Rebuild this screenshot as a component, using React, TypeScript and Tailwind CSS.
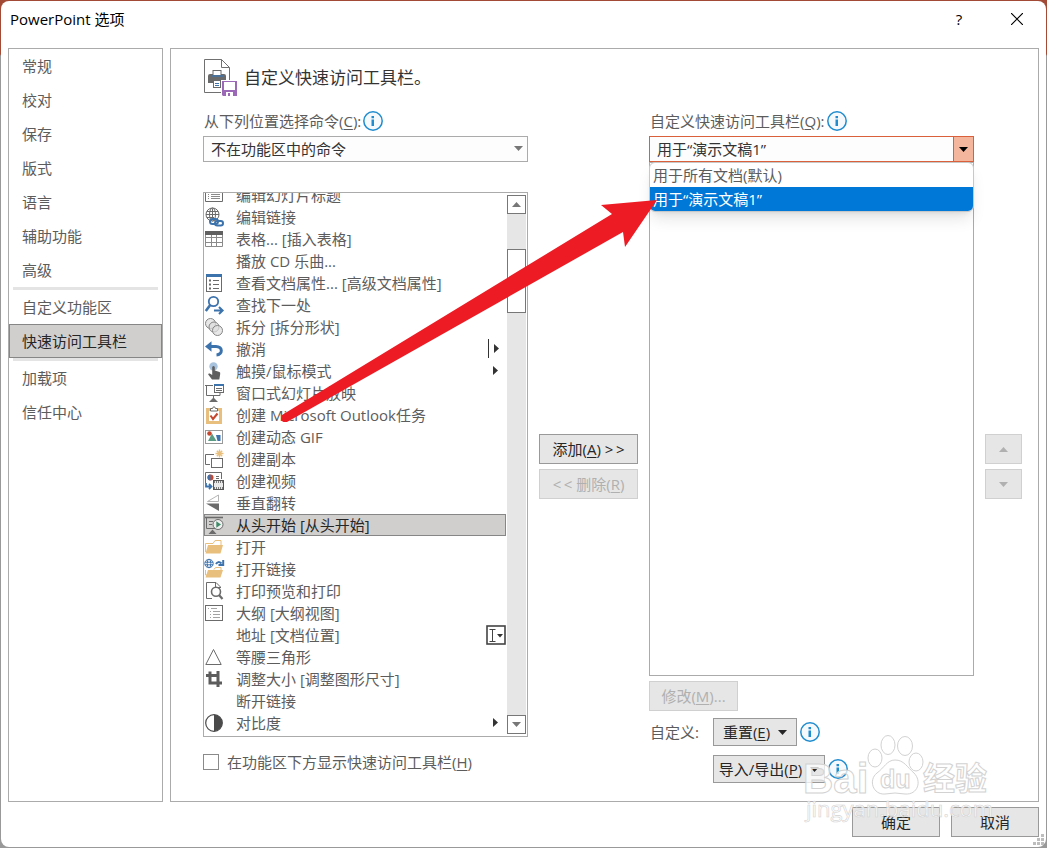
import type { ReactNode } from "react";

const BLUE = "#3d73ad";
const GRAY = "#6b6b6b";
const GOLD = "#e8bf7c";

type Command = {
  name: string;
  icon?: ReactNode;
  marker?: "menu" | "split" | "edit";
  selected?: boolean;
};

const chain = (
  <g fill="none" stroke={BLUE} strokeWidth="2">
    <rect x="5" y="11" width="8" height="5" rx="2.5" />
    <rect x="10" y="13" width="8" height="4.5" rx="2.2" />
  </g>
);

const commands: Command[] = [
  {
    name: "编辑幻灯片标题",
    icon: (
      <g fill="none" stroke={GRAY}>
        <path d="M3 3.5H17.5V15.5H.5V6" />
        <path d="M6 8.5H15M6 10.5H15M6 12.5H15M3 8.5H4M3 10.5H4M3 12.5H4" stroke="#8a8a8a" />
        <path d="M0 6L3 4" stroke={BLUE} strokeWidth="2" />
      </g>
    ),
  },
  {
    name: "编辑链接",
    icon: (
      <>
        <g fill="none" stroke={GRAY}>
          <circle cx="7.5" cy="6.5" r="6.5" />
          <ellipse cx="7.5" cy="6.5" rx="3" ry="6.5" />
          <path d="M1 6.5H14M2 3.5H13M2 9.5H9M7.5 .5V10" />
        </g>
        {chain}
      </>
    ),
  },
  {
    name: "表格... [插入表格]",
    icon: (
      <>
        <path d="M.5 1.5H17.5V16.5H.5ZM.5 7.5H17.5M.5 12.5H17.5M6.5 2V16.5M11.5 2V16.5" fill="none" stroke="#8a8a8a" />
        <rect y="1" width="18" height="4" fill="#606060" />
      </>
    ),
  },
  { name: "播放 CD 乐曲..." },
  {
    name: "查看文档属性... [高级文档属性]",
    icon: (
      <>
        <rect x="1.5" y=".5" width="15" height="17" fill="white" stroke={GRAY} />
        <rect x="1" width="16" height="3" fill={BLUE} />
        <path d="M8 6.5H14M8 10.5H14M8 14.5H14" stroke={GRAY} />
        <path d="M4 6.5H6M4 10.5H6M4 14.5H6" stroke={GRAY} strokeWidth="2" />
      </>
    ),
  },
  {
    name: "查找下一处",
    icon: (
      <g fill="none" stroke={BLUE}>
        <circle cx="8.5" cy="5.5" r="4.7" strokeWidth="1.8" />
        <path d="M5.2 9L.8 15" strokeWidth="2.6" />
        <path d="M9 14.5H17.5M14 11L17.6 14.5L14 18" strokeWidth="2" />
      </g>
    ),
  },
  {
    name: "拆分 [拆分形状]",
    icon: (
      <g fill="#dedede" fillOpacity=".7" stroke="#858585">
        <circle cx="5.5" cy="5.5" r="5" />
        <circle cx="9" cy="9" r="5" />
        <circle cx="12.5" cy="12.5" r="5" />
      </g>
    ),
  },
  {
    name: "撤消",
    marker: "split",
    icon: (
      <>
        <path d="M4 6.5H11C18 6.5 18 14.5 11.5 15" fill="none" stroke={BLUE} strokeWidth="3" />
        <path d="M0 6.5L6.5 1.2V11.8Z" fill={BLUE} />
      </>
    ),
  },
  {
    name: "触摸/鼠标模式",
    marker: "menu",
    icon: (
      <>
        <circle cx="8.5" cy="4.5" r="4.2" fill="#a8c3de" />
        <path d="M7.2 5Q8.5 3.2 9.8 5V8.5L14.5 10Q15.5 10.4 15.2 12L14.3 17.5H7L3.2 12.6Q3.2 11 4.8 11.5L7.2 13Z" fill="#5f5f5f" />
      </>
    ),
  },
  {
    name: "窗口式幻灯片放映",
    icon: (
      <g fill="none" stroke={GRAY}>
        <path d="M0 1.5H8M1.5 2V11.5H15V8.5M8.5 11.5V14" />
        <path d="M4 18L8.5 13.5L13 18Z" fill={GRAY} stroke="none" />
        <rect x="9.5" y=".5" width="9" height="8" fill="white" />
        <path d="M9 1H19" stroke={BLUE} strokeWidth="2" />
        <path d="M11 4.5H17M11 6.5H17" />
      </g>
    ),
  },
  {
    name: "创建 Microsoft Outlook任务",
    icon: (
      <>
        <rect x="2.5" y="3.5" width="13" height="13" fill="white" stroke={GOLD} strokeWidth="3" />
        <path d="M5.5 5V2.5H7.5Q9-1.4 10.5 2.5H12.5V5Z" fill="white" stroke={GRAY} />
        <path d="M5.5 9.5L8 13L12.5 7.5" fill="none" stroke="#c4472e" strokeWidth="2" />
      </>
    ),
  },
  {
    name: "创建动态 GIF",
    icon: (
      <>
        <rect x=".5" y="2.5" width="17" height="13" fill="white" stroke="#999999" />
        <circle cx="4.5" cy="5.5" r="2.3" fill="#c4472e" />
        <path d="M3 13L7 5.5L11.5 13Z" fill="#5b9b83" />
        <path d="M11 7H15.5V13H12.5Z" fill={BLUE} />
      </>
    ),
  },
  {
    name: "创建副本",
    icon: (
      <>
        <path d="M9 4.5H.5V14.5H5" fill="none" stroke={GRAY} />
        <rect x="6.5" y="8.5" width="11" height="9" fill="white" stroke={GRAY} />
        <path d="M14.5-.5V7.5M10.5 3.5H18.5M11.8 .8L17.2 6.2M17.2 .8L11.8 6.2" stroke={GOLD} strokeWidth="1.4" />
      </>
    ),
  },
  {
    name: "创建视频",
    icon: (
      <>
        <path d="M.5 11V.5H16.5V7" fill="none" stroke={GRAY} />
        <circle cx="5.5" cy="5.5" r="3" fill="#c4472e" />
        <path d="M5.5 5.5V2.5A3 3 0 0 0 5.5 8.5Z" fill={BLUE} />
        <path d="M11 4.5H14M11 6.5H14" stroke={GRAY} />
        <rect x="8.5" y="8.5" width="10" height="9" fill="#e9e9e9" stroke="#555555" />
        <path d="M9 10H18M9 16H18" stroke="#555555" strokeWidth="1.6" strokeDasharray="1 1" />
        <path d="M1 11V14.5H6M4 12L6.5 14.5L4 17" fill="none" stroke={BLUE} strokeWidth="1.8" />
      </>
    ),
  },
  {
    name: "垂直翻转",
    icon: (
      <>
        <path d="M2.5 7.5H13.5V1Z" fill="white" stroke="#b5b5b5" />
        <path d="M1 9.5H14V17Z" fill={GRAY} />
      </>
    ),
  },
  {
    name: "从头开始 [从头开始]",
    selected: true,
    icon: (
      <>
        <path d="M1.5 2V12.5H10" fill="none" stroke={GRAY} />
        <path d="M3.5 18L7.5 13.5L11.5 18Z" fill={GRAY} />
        <path d="M0 1.5H18" stroke={GRAY} strokeWidth="1.6" />
        <path d="M4 5.5H8M4 8.5H7" stroke={GRAY} />
        <circle cx="13" cy="8.5" r="5" fill="#eeeeee" stroke={GRAY} />
        <path d="M11.3 5.3L16 8.5L11.3 11.7Z" fill="#3f8a68" />
      </>
    ),
  },
  {
    name: "打开",
    icon: (
      <>
        <path d="M.5 14V5.5H8L10 2.5H16V7" fill="white" stroke={GOLD} />
        <path d="M3 7H18L15.5 15.5H.5Z" fill={GOLD} />
      </>
    ),
  },
  {
    name: "打开链接",
    icon: (
      <>
        <path d="M.5 10V15H4M9 9.5L10.5 7.5H16V10" fill="none" stroke={GOLD} />
        <path d="M3 10H18L15.5 17.5H.5Z" fill={GOLD} />
        <g fill="none" stroke={BLUE}>
          <circle cx="4" cy="3.5" r="4.2" fill="white" />
          <ellipse cx="4" cy="3.5" rx="1.8" ry="4.2" />
          <path d="M0 2.2H8M0 4.8H8" />
          <path d="M11 4Q13 .5 16.5 3.5M18.2 0V5H13.5" strokeWidth="2" />
        </g>
      </>
    ),
  },
  {
    name: "打印预览和打印",
    icon: (
      <g fill="none" stroke={GRAY}>
        <path d="M7 16.5H1.5V.5H11L15.5 5V6M10.5 .5V5.5H15" />
        <circle cx="11" cy="9.8" r="4.5" fill="white" strokeWidth="1.6" />
        <path d="M14 13L17.5 17" strokeWidth="2.2" />
      </g>
    ),
  },
  {
    name: "大纲 [大纲视图]",
    icon: (
      <g fill="none" stroke={GRAY}>
        <rect x=".5" y="1.5" width="17" height="15" />
        <path d="M3 4.5H4M6 4.5H12M5 7.5H6M8 7.5H15M5 10.5H6M8 10.5H15M5 13.5H6M8 13.5H15" stroke="#a3a3a3" />
      </g>
    ),
  },
  { name: "地址 [文档位置]", marker: "edit" },
  {
    name: "等腰三角形",
    icon: <path d="M.8 16.5L8.5 1.5L16.2 16.5Z" fill="none" stroke={GRAY} />,
  },
  {
    name: "调整大小 [调整图形尺寸]",
    icon: <path d="M5 4V13H12M1 5.5H13V17M5 1.5V5M12 13H17M13 1V5" fill="none" stroke="#5c5c5c" strokeWidth="3" />,
  },
  { name: "断开链接" },
  {
    name: "对比度",
    marker: "menu",
    icon: (
      <>
        <circle cx="9" cy="9" r="8.3" fill="white" stroke="#4a4a4a" strokeWidth="1.2" />
        <path d="M9 .7A8.3 8.3 0 0 1 9 17.3Z" fill="#4a4a4a" />
      </>
    ),
  },
];

function Marker({ kind }: { kind: "menu" | "split" | "edit" }) {
  return (
    <svg className="ml-auto h-5 w-5 shrink-0 overflow-visible" viewBox="0 0 20 20" fill="#333333">
      {kind === "menu" && <path d="M8 5L13 9.5L8 14Z" />}
      {kind === "split" && <path d="M3 0H4V19H3ZM9 5L14 9.5L9 14Z" />}
      {kind === "edit" && (
        <>
          <rect x="2" y="1" width="18" height="18" fill="none" stroke="#444444" strokeWidth="1.6" />
          <path d="M4.5 4.5H10.5M4.5 16.5H10.5M7.5 5V16" stroke="#444444" />
          <path d="M12 9H18L15 12.5Z" />
        </>
      )}
    </svg>
  );
}

function Triangle({ up = false, className = "" }: { up?: boolean; className?: string }) {
  return (
    <svg className={"h-[5px] w-[9px] shrink-0 " + className} viewBox="0 0 9 5" fill="currentColor">
      <path d={up ? "M0 5L4.5 0L9 5Z" : "M0 0L4.5 5L9 0Z"} />
    </svg>
  );
}

function Info() {
  return (
    <button aria-label="信息" className="shrink-0">
      <svg className="h-5 w-5" viewBox="0 0 20 20">
        <circle cx="10" cy="10" r="9.2" fill="#f6f9fb" stroke="#1f8ccf" strokeWidth="1.5" />
        <path d="M8.5 8.5H11V15H8.5ZM8.5 5H11V7.2H8.5Z" fill="#1f8ccf" />
      </svg>
    </button>
  );
}

function NavItem({ name, active = false }: { name: string; active?: boolean }) {
  return (
    <button
      className={
        "h-[34px] w-full shrink-0 border px-3 text-left " +
        (active ? "border-[#868686] bg-[#d0cfce] text-[#262626]" : "border-transparent")
      }
    >
      {name}
    </button>
  );
}

function NavLine() {
  return <div className="mx-1 h-[3px] shrink-0 bg-[#e4e4e4]" />;
}

function Key({ children }: { children: string }) {
  return (
    <span>
      (<span className="underline underline-offset-2">{children}</span>)
    </span>
  );
}

const button = "flex h-[30px] shrink-0 items-center justify-center border border-[#999999] bg-[#e6e6e6] text-[#262626]";
const buttonOff = "flex h-[30px] shrink-0 items-center justify-center border border-[#d0d0d0] bg-[#e6e6e6] text-[#b0b0b0]";

function HeaderIcon() {
  return (
    <svg className="h-[38px] w-[35px] shrink-0" viewBox="0 0 35 38">
      <path d="M1.5 .5H18.5L26.5 8.5V33.5H1.5Z" fill="white" stroke="#707070" />
      <path d="M18.5 .5V8.5H26.5" fill="none" stroke="#707070" />
      <path d="M5 17Q5 15 7 15H21Q23 15 23 17V24H5Z" fill="#6a6a6a" />
      <rect x="10" y="11.5" width="8" height="5" fill="white" stroke="#6a6a6a" />
      <path d="M8 17H20" stroke={BLUE} strokeWidth="1.4" />
      <rect x="10.5" y="21.5" width="7" height="7" fill="white" stroke="#6a6a6a" />
      <path d="M12 24.5H16M12 26.5H16" stroke={BLUE} />
      <path d="M18 21H35V38H18Z" fill="white" />
      <path d="M19 22H34V37H20L19 36Z" fill="#9b69b8" />
      <path d="M21 23H32V31H21ZM23 33H30V37H23Z" fill="white" />
      <path d="M25 34H27V37H25Z" fill="#9b69b8" />
    </svg>
  );
}

function Watermark() {
  return (
    <svg
      aria-hidden="true"
      className="pointer-events-none absolute right-[46px] bottom-[14px] h-[104px] w-[200px]"
      viewBox="0 0 200 104"
      fill="white"
      fillOpacity=".75"
      stroke="#d2d2d2"
    >
      <ellipse cx="74" cy="28" rx="7" ry="9" />
      <ellipse cx="87" cy="15" rx="7" ry="9.5" />
      <ellipse cx="104" cy="16" rx="7.5" ry="9.5" />
      <ellipse cx="115" cy="32" rx="7" ry="9" />
      <path d="M94 30C86 30 83 38 76 43C67 50 72 65 84 64Q94 62 104 64C117 65 121 51 113 43C106 37 103 30 94 30Z" />
      <g className="font-['Liberation_Sans',sans-serif] font-bold">
        <text x="2" y="63" fontSize="42">Bai</text>
        <text x="79" y="58" fontSize="25">du</text>
      </g>
      <text x="122" y="60" fontSize="32" className="font-['Noto_Sans_CJK_SC',sans-serif] font-bold">经验</text>
      <text x="5" y="87" fontSize="22" strokeWidth="0.6" className="font-['Open_Sans',sans-serif]">jingyan.baidu.com</text>
    </svg>
  );
}

export default function App() {
  return (
    <div className="relative h-screen min-h-[640px] overflow-hidden bg-[linear-gradient(#a24a35_54px,#999999_56px)] p-px font-['Open_Sans','Noto_Sans_CJK_SC',sans-serif] text-[15px] leading-5 text-[#5c5c5c]">
      <div className="flex h-full flex-col rounded-lg bg-white">
        {/* title bar */}
        <header className="flex h-[47px] shrink-0 items-start pl-[9px] text-black">
          <h1 className="mt-2 flex-1">PowerPoint 选项</h1>
          <button aria-label="帮助" className="h-9 w-[58px]">?</button>
          <button aria-label="关闭" className="flex h-9 w-[58px] items-center justify-center">
            <svg className="h-3 w-3" viewBox="0 0 12 12" fill="none" stroke="black" strokeWidth="1.2">
              <path d="M0 0L12 12M12 0L0 12" />
            </svg>
          </button>
        </header>

        <main className="flex min-h-0 flex-1 gap-[7px] px-[7px]">
          <nav className="flex w-[155px] shrink-0 flex-col border border-[#ababab]">
            <NavItem name="常规" />
            <NavItem name="校对" />
            <NavItem name="保存" />
            <NavItem name="版式" />
            <NavItem name="语言" />
            <NavItem name="辅助功能" />
            <NavItem name="高级" />
            <NavLine />
            <NavItem name="自定义功能区" />
            <NavItem name="快速访问工具栏" active />
            <NavLine />
            <NavItem name="加载项" />
            <NavItem name="信任中心" />
          </nav>

          <section className="flex min-w-0 flex-1 flex-col border border-[#ababab] pt-2.5 pr-4 pb-[18px] pl-8">
            <div className="flex shrink-0 items-center gap-1.5 text-[17px] text-[#333333]">
              <HeaderIcon />
              <h2>自定义快速访问工具栏。</h2>
            </div>

            <div className="mt-3.5 grid min-h-0 flex-1 grid-cols-[1fr_99px_1fr_37px] gap-[11px]">
              {/* available commands */}
              <div className="flex min-h-0 min-w-0 flex-col pb-[11px]">
                <div className="flex shrink-0 items-center gap-0.5 pl-px">
                  <label htmlFor="source">从下列位置选择命令<Key>C</Key>:</label>
                  <Info />
                </div>
                <div className="relative mt-[5px] shrink-0">
                  <select id="source" className="h-[26px] w-full appearance-none border border-[#ababab] bg-[#fdfdfd] pl-[7px] text-[#333333]">
                    <option>不在功能区中的命令</option>
                  </select>
                  <Triangle className="absolute top-2.5 right-[5px] text-[#777777]" />
                </div>

                <div className="mt-[30px] flex min-h-0 flex-1 gap-px border border-[#ababab] pr-px">
                  <ul role="listbox" aria-label="命令" className="flex min-w-0 flex-1 flex-col justify-end overflow-hidden pb-0.5">
                    {commands.map((c) => (
                      <li
                        key={c.name}
                        role="option"
                        aria-selected={!!c.selected}
                        className={
                          "flex h-[22px] shrink-0 items-center border whitespace-nowrap " +
                          (c.selected ? "border-[#868686] bg-[#d0cfce] text-[#262626]" : "border-transparent")
                        }
                      >
                        <svg className="mr-[13px] h-[18px] w-[18px] shrink-0 overflow-visible" viewBox="0 0 18 18">
                          {c.icon}
                        </svg>
                        {c.name}
                        {c.marker && <Marker kind={c.marker} />}
                      </li>
                    ))}
                  </ul>
                  <div className="my-0.5 flex w-[19px] shrink-0 flex-col bg-[#e6e6e6] text-[#777777]">
                    <button aria-label="向上滚动" className="flex h-[19px] items-center justify-center border border-[#777777] bg-white">
                      <Triangle up />
                    </button>
                    <div className="mt-[35px] h-16 border border-[#777777] bg-white" />
                    <button aria-label="向下滚动" className="mt-auto flex h-[19px] items-center justify-center border border-[#777777] bg-white">
                      <Triangle />
                    </button>
                  </div>
                </div>

                <label className="mt-[15px] flex h-5 shrink-0 items-center gap-2">
                  <input type="checkbox" className="h-4 w-4 appearance-none border border-[#8a8a8a] bg-white checked:bg-[#3d73ad]" />
                  <span>在功能区下方显示快速访问工具栏<Key>H</Key></span>
                </label>
              </div>

              <div className="flex flex-col justify-center gap-[5px] pt-[85px] pb-[46px]">
                <button className={button}>添加<Key>A</Key>&nbsp;&gt;&thinsp;&gt;</button>
                <button disabled className={buttonOff}>&lt;&thinsp;&lt;&nbsp;删除<Key>R</Key></button>
              </div>

              {/* toolbar content */}
              <div className="flex min-h-0 min-w-0 flex-col">
                <div className="flex shrink-0 items-center gap-0.5 pl-px">
                  <label htmlFor="target">自定义快速访问工具栏<Key>Q</Key>:</label>
                  <Info />
                </div>
                <div className="relative mt-[5px] shrink-0">
                  <select id="target" className="h-[26px] w-full appearance-none border border-[#d9603b] bg-[#fdfdfd] pl-[7px] text-[#333333]">
                    <option>用于“演示文稿1”</option>
                  </select>
                  <span className="pointer-events-none absolute top-0 right-0 flex h-[26px] w-[21px] items-center justify-center border border-[#d9603b] bg-[#f4b69c] text-black">
                    <Triangle />
                  </span>
                  <ul role="listbox" aria-label="自定义快速访问工具栏" className="absolute top-full z-10 w-full overflow-hidden rounded-md border border-[#c8c8c8] bg-white shadow-lg">
                    <li role="option" aria-selected="false" className="h-6 px-[3px] leading-6">用于所有文档(默认)</li>
                    <li role="option" aria-selected="true" className="h-6 bg-[#0078d7] px-[3px] leading-6 text-white">用于“演示文稿1”</li>
                  </ul>
                </div>
                <div className="min-h-0 flex-1 border border-[#ababab]" />
                <button disabled className={buttonOff + " mt-[5px] w-[89px]"}>修改<Key>M</Key>...</button>
                <div className="mt-[7px] grid shrink-0 grid-cols-[64px_1fr] gap-y-[9px]">
                  <span className="self-center pl-px">自定义:</span>
                  <div className="flex items-center gap-[3px]">
                    <button className="flex h-7 w-[84px] items-center justify-center gap-2 border border-[#999999] bg-[#e6e6e6] text-[#262626]">
                      <span>重置<Key>E</Key></span>
                      <Triangle />
                    </button>
                    <Info />
                  </div>
                  <div className="col-start-2 flex items-center gap-[3px]">
                    <button className="flex h-7 w-28 items-center justify-center gap-2 border border-[#999999] bg-[#e6e6e6] text-[#262626]">
                      <span>导入/导出<Key>P</Key></span>
                      <Triangle />
                    </button>
                    <Info />
                  </div>
                </div>
              </div>

              <div className="flex flex-col justify-center gap-[5px] pt-[85px] pb-[46px]">
                <button disabled aria-label="上移" className={buttonOff}><Triangle up /></button>
                <button disabled aria-label="下移" className={buttonOff}><Triangle /></button>
              </div>
            </div>
          </section>
        </main>

        <footer className="flex shrink-0 justify-end gap-[11px] px-[7px] pt-[5px] pb-2.5">
          <button className={button + " w-[88px]"}>确定</button>
          <button className={button + " w-[88px]"}>取消</button>
        </footer>
      </div>

      {/* resize grip */}
      <svg className="absolute right-0.5 bottom-0.5 h-3 w-3" viewBox="0 0 12 12" fill="#bdbdbd">
        <path d="M8 0H11V3H8ZM8 4H11V7H8ZM8 8H11V11H8ZM4 4H7V7H4ZM4 8H7V11H4ZM0 8H3V11H0Z" />
      </svg>

      {/* pointer drawn across the columns */}
      <svg aria-hidden="true" className="pointer-events-none absolute top-[195px] left-[275px] z-20 h-[235px] w-[390px]" viewBox="275 195 390 235">
        <path d="M282 415L612 214L601 205L657 200L625 247L623 232L287 422Q279 423 282 415Z" fill="#ed1c24" />
      </svg>

      <Watermark />
    </div>
  );
}
